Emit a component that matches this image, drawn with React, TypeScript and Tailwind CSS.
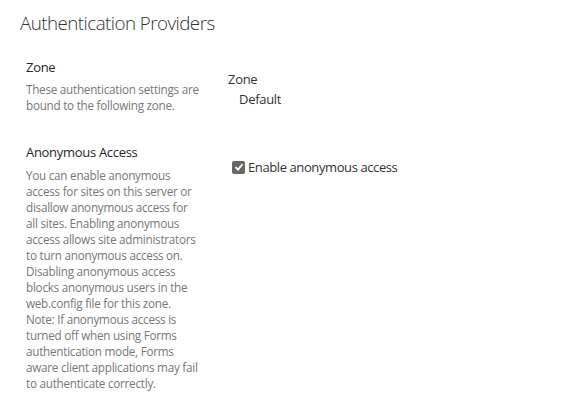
import React from "react";

const font = { fontFamily: '"Open Sans", "Noto Sans", sans-serif' };

function Lines({ lines }: { lines: string[] }) {
  return (
    <div className="text-[11.7px] leading-[16px] tracking-[-0.25px] text-[#777777]">
      {lines.map((l, i) => (
        <div key={i} className="whitespace-nowrap">{l}</div>
      ))}
    </div>
  );
}

export default function App() {
  return (
    <div className="w-[586px] h-[404px] bg-white overflow-hidden" style={font}>
      <div className="pl-[20px] pt-[10px] text-[18.8px] leading-[26px] tracking-[-0.55px] font-light text-[#333333]">
        Authentication Providers
      </div>
      <div className="flex pl-[26px] pt-[22px]">
        <div className="w-[202px]">
          <div className="text-[13px] leading-[18px] tracking-[-0.3px] text-[#262626]">Zone</div>
          <div className="pt-[5px]">
            <Lines lines={["These authentication settings are", "bound to the following zone."]} />
          </div>
        </div>
        <div className="pt-[12px]">
          <div className="text-[13px] leading-[18px] tracking-[-0.3px] text-[#333333]">Zone</div>
          <div className="pl-[11px] pt-[2px] text-[13px] leading-[18px] tracking-[-0.3px] text-[#333333]">Default</div>
        </div>
      </div>
      <div className="flex pl-[26px] pt-[30px]">
        <div className="w-[202px]">
          <div className="text-[13px] leading-[18px] tracking-[-0.3px] text-[#262626]">Anonymous Access</div>
          <div className="pt-[6px]">
            <Lines
              lines={[
                "You can enable anonymous",
                "access for sites on this server or",
                "disallow anonymous access for",
                "all sites. Enabling anonymous",
                "access allows site administrators",
                "to turn anonymous access on.",
                "Disabling anonymous access",
                "blocks anonymous users in the",
                "web.config file for this zone.",
                "Note: If anonymous access is",
                "turned off when using Forms",
                "authentication mode, Forms",
                "aware client applications may fail",
                "to authenticate correctly.",
              ]}
            />
          </div>
        </div>
        <div className="pt-[15px] pl-[4px]">
          <label className="flex items-center gap-[3px] text-[13px] leading-[18px] tracking-[-0.4px] text-[#333333]">
            <span className="w-[13px] h-[13px] rounded-[2px] bg-[#666666] flex items-center justify-center">
              <svg width="10" height="10" viewBox="0 0 10 10">
                <path d="M1.5 5.2 L4 7.6 L8.6 2.2" stroke="white" strokeWidth="1.8" fill="none" />
              </svg>
            </span>
            Enable anonymous access
          </label>
        </div>
      </div>
    </div>
  );
}
